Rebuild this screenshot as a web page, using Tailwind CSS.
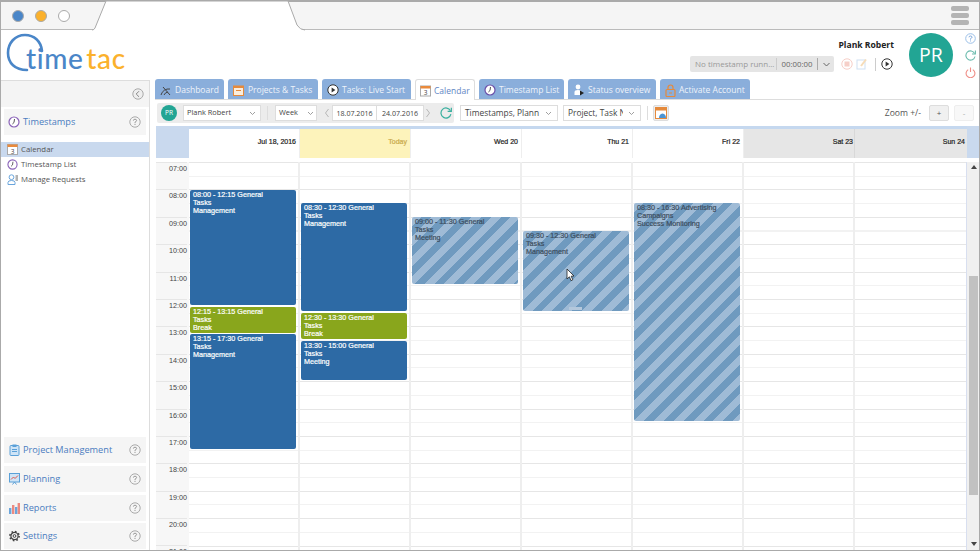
<!DOCTYPE html>
<html>

<head>
  <title>TimeTac Calendar</title>
  <script src="https://cdn.jsdelivr.net/npm/@tailwindcss/browser@4"></script>
</head>

<body class="bg-white font-['Open_Sans',sans-serif] text-[#333]">
  <div class="w-[980px] h-[551px] flex flex-col overflow-hidden border-x border-b border-[#aaa] box-border">

    <!-- browser chrome -->
    <div class="relative h-[30px] shrink-0 bg-[#f5f5f5] border-t-2 border-b border-t-[#aaa] border-b-[#bbb] flex items-center">
      <div class="flex items-center gap-[11px] ml-[11px]">
        <span class="w-[12px] h-[12px] rounded-full bg-[#4a86c8] border border-[#aaa]"></span>
        <span class="w-[12px] h-[12px] rounded-full bg-[#fbb12c] border border-[#aaa]"></span>
        <span class="w-[12px] h-[12px] rounded-full bg-white border border-[#aaa]"></span>
      </div>
      <svg class="absolute left-[90px] top-[-2px]" width="215" height="31" viewBox="0 0 215 31">
        <path d="M1 30 Q3 30 4 28 L15 1 H197 L206 25 Q209 30 214 30" fill="#fff" stroke="#aaa" stroke-width="1" />
        <path d="M4 30.5 H210" stroke="#fff" stroke-width="2" />
      </svg>
      <div class="ml-auto mr-[10px] flex flex-col gap-[2px]">
        <span class="block w-[18px] h-[5px] rounded-[2px] bg-[#b4b4b4]"></span>
        <span class="block w-[18px] h-[5px] rounded-[2px] bg-[#b4b4b4]"></span>
        <span class="block w-[18px] h-[5px] rounded-[2px] bg-[#b4b4b4]"></span>
      </div>
    </div>

    <!-- app header -->
    <div class="h-[50px] shrink-0 flex items-start">
      <div class="relative w-[140px] h-[49px] shrink-0">
        <svg class="absolute left-[4px] top-[3px]" width="44" height="42" viewBox="0 0 44 42">
          <path d="M37 18 C36 8 29 2 20 2 C10 2 3 10 3 20 C3 30 10 37 22 37" fill="none" stroke="#4a86c8" stroke-width="2.6" stroke-linecap="round" />
        </svg>
        <div class="absolute left-[25px] top-[8px] flex gap-[3px] font-['Lato',sans-serif] font-medium text-[28px] leading-[40px] tracking-[0.6px] whitespace-nowrap">
          <span class="text-[#4a86c8]">time</span>
          <span class="text-[#fbb12c]">tac</span>
        </div>
      </div>

      <div class="ml-auto flex items-start">
        <div class="flex flex-col items-end mt-[9px] mr-[16px]">
          <div class="text-[8.6px] leading-[12px] font-bold text-[#222] mr-[-1px]">Plank Robert</div>
          <div class="flex items-center mt-[5px]">
            <div class="w-[144px] h-[16px] rounded-[2px] bg-[#e5e5e5] flex items-center text-[8px] text-[#999]">
              <span class="pl-[5px] w-[87px] whitespace-nowrap border-r border-[#ccc] leading-[12px]">No timestamp runn...</span>
              <span class="w-[41px] text-center text-[7.8px] text-[#666] border-r border-[#aaa] leading-[12px]">00:00:00</span>
              <svg class="ml-[4px]" width="9" height="9" viewBox="0 0 9 9"><path d="M1.5 3 L4.5 6 L7.5 3" fill="none" stroke="#666" /></svg>
            </div>
            <svg class="ml-[7px]" width="12" height="12" viewBox="0 0 12 12">
              <circle cx="6" cy="6" r="5.2" fill="none" stroke="#f6cfc8" /><rect x="3.5" y="3.5" width="5" height="5" fill="#f6cfc8" />
            </svg>
            <svg class="ml-[3px]" width="12" height="12" viewBox="0 0 12 12">
              <rect x="1" y="2" width="8" height="9" fill="none" stroke="#cfe0f2" /><path d="M5 8 L10 1.5" stroke="#f6dcb8" stroke-width="2" />
            </svg>
            <span class="ml-[7px] w-px h-[13px] bg-[#ccc]"></span>
            <svg class="ml-[5px]" width="12" height="12" viewBox="0 0 12 12">
              <circle cx="6" cy="6" r="5.2" fill="none" stroke="#333" /><path d="M4.6 3.4 L8.4 6 L4.6 8.6 Z" fill="#333" />
            </svg>
          </div>
        </div>
        <div class="w-[44px] h-[44px] mt-[3px] rounded-full bg-[#22a594] flex items-center justify-center text-white text-[19.5px]">PR</div>
        <div class="flex flex-col items-center gap-[6px] mt-[3px] ml-[12px] mr-[3px]">
          <svg width="11" height="11" viewBox="0 0 11 11">
            <circle cx="5.5" cy="5.5" r="4.8" fill="none" stroke="#9cc0e8" /><path d="M4 4.3 Q4 3 5.5 3 Q7 3 7 4.3 Q7 5 5.5 5.7 V6.6 M5.5 7.5 V8.4" fill="none" stroke="#6f9fd8" stroke-width=".9" />
          </svg>
          <svg width="11" height="11" viewBox="0 0 11 11">
            <path d="M9.6 3.4 A4.6 4.6 0 1 0 10 6.5" fill="none" stroke="#6cbcae" stroke-width="1.1" /><path d="M10.4 .6 V4 H7" fill="none" stroke="#6cbcae" stroke-width="1.1" />
          </svg>
          <svg width="11" height="11" viewBox="0 0 11 11">
            <path d="M3.2 2.6 A4.4 4.4 0 1 0 7.8 2.6" fill="none" stroke="#ef8f88" stroke-width="1.1" /><path d="M5.5 .5 V5" stroke="#ef8f88" stroke-width="1.1" />
          </svg>
        </div>
      </div>
    </div>

    <div class="flex-1 flex min-h-0">
      <!-- sidebar -->
      <aside class="w-[149px] shrink-0 border-t border-r border-[#ddd] flex flex-col justify-between text-[#4a7cc0]">
        <div>
          <div class="h-[26px] bg-[#f4f4f4] flex items-center justify-end pr-[5px]">
            <svg width="12" height="12" viewBox="0 0 12 12"><circle cx="6" cy="6" r="5.2" fill="#eee" stroke="#aaa" /><path d="M7 3.2 L4.2 6 L7 8.8" fill="none" stroke="#888" /></svg>
          </div>
          <div class="mt-[2px] mr-[3px] ml-[3px] h-[26px] bg-[#f5f5f5] flex items-center pl-[4px] pr-[5px] text-[9.2px]">
            <svg width="12" height="12" viewBox="0 0 12 12"><circle cx="6" cy="6" r="5" fill="#fff" stroke="#8a63b8" stroke-width="1.2" /><path d="M6.5 3 L6 6.5 L4.4 8" fill="none" stroke="#555" /></svg>
            <span class="ml-[3px]">Timestamps</span>
            <svg class="ml-auto" width="12" height="12" viewBox="0 0 12 12"><circle cx="6" cy="6" r="5.2" fill="none" stroke="#aaa" /><path d="M4.4 4.6 Q4.4 3.2 6 3.2 Q7.6 3.2 7.6 4.6 Q7.6 5.4 6 6.2 V7.2 M6 8 V9" fill="none" stroke="#999" /></svg>
          </div>
          <ul class="mt-[7px] text-[7.8px] text-[#555]">
            <li class="h-[15px] bg-[#c9d9ee] flex items-center pl-[6px] gap-[3px]">
              <svg width="11" height="11" viewBox="0 0 11 11"><rect x=".5" y=".5" width="10" height="10" fill="#fff" stroke="#aaa" /><rect x=".5" y=".5" width="10" height="2.5" fill="#e98a3c" /><text x="5.5" y="9.5" text-anchor="middle" font-size="6.5" fill="#444">3</text></svg>
              <span>Calendar</span>
            </li>
            <li class="h-[15px] flex items-center pl-[6px] gap-[3px]">
              <svg width="11" height="11" viewBox="0 0 12 12"><circle cx="6" cy="6" r="5" fill="#fff" stroke="#8a63b8" stroke-width="1.2" /><path d="M6.5 3 L6 6.5 L4.4 8" fill="none" stroke="#555" /></svg>
              <span>Timestamp List</span>
            </li>
            <li class="h-[15px] flex items-center pl-[6px] gap-[3px]">
              <svg width="11" height="11" viewBox="0 0 11 11"><circle cx="4.5" cy="3.2" r="2.4" fill="#fff" stroke="#6aa5dc" /><path d="M1 10.5 V8.5 Q1 6.5 4.5 6.5 Q8 6.5 8 8.5 V10.5 Z" fill="#fff" stroke="#6aa5dc" /><path d="M8.5 2 H11 M8.5 4 H11 M8.5 6 H11" stroke="#666" /></svg>
              <span>Manage Requests</span>
            </li>
          </ul>
        </div>

        <div class="flex flex-col gap-[3px] mx-[3px] mb-[1px] text-[9.2px]">
          <div class="h-[26px] bg-[#f5f5f5] flex items-center pl-[5px] pr-[5px]">
            <svg width="11" height="12" viewBox="0 0 11 12"><rect x="1" y="1.5" width="9" height="10" rx="1" fill="#cfe4f6" stroke="#5aa0d8" /><rect x="3.5" y=".5" width="4" height="2.5" fill="#5aa0d8" /><path d="M3 5.5 H8 M3 7.5 H8" stroke="#5aa0d8" /></svg>
            <span class="ml-[3px]">Project Management</span>
            <svg class="ml-auto" width="12" height="12" viewBox="0 0 12 12"><circle cx="6" cy="6" r="5.2" fill="none" stroke="#aaa" /><path d="M4.4 4.6 Q4.4 3.2 6 3.2 Q7.6 3.2 7.6 4.6 Q7.6 5.4 6 6.2 V7.2 M6 8 V9" fill="none" stroke="#999" /></svg>
          </div>
          <div class="h-[26px] bg-[#f5f5f5] flex items-center pl-[5px] pr-[5px]">
            <svg width="11" height="12" viewBox="0 0 11 12"><rect x=".5" y=".5" width="10" height="8.5" fill="#cfe4f6" stroke="#5aa0d8" /><path d="M2 6.5 L4.5 4 L6 5.5 L9 2.5" fill="none" stroke="#e0584c" /><path d="M3.5 11.5 L5.5 9 L7.5 11.5" fill="none" stroke="#5aa0d8" /></svg>
            <span class="ml-[3px]">Planning</span>
            <svg class="ml-auto" width="12" height="12" viewBox="0 0 12 12"><circle cx="6" cy="6" r="5.2" fill="none" stroke="#aaa" /><path d="M4.4 4.6 Q4.4 3.2 6 3.2 Q7.6 3.2 7.6 4.6 Q7.6 5.4 6 6.2 V7.2 M6 8 V9" fill="none" stroke="#999" /></svg>
          </div>
          <div class="h-[26px] bg-[#f5f5f5] flex items-center pl-[5px] pr-[5px]">
            <svg width="11" height="12" viewBox="0 0 11 12"><rect x="0" y="6" width="2.4" height="6" fill="#6aa5dc" /><rect x="3" y="3" width="2.4" height="9" fill="#ec8a80" /><rect x="6" y="5" width="2.4" height="7" fill="#6aa5dc" /><rect x="8.6" y="1" width="2.4" height="11" fill="#ec8a80" /></svg>
            <span class="ml-[3px]">Reports</span>
            <svg class="ml-auto" width="12" height="12" viewBox="0 0 12 12"><circle cx="6" cy="6" r="5.2" fill="none" stroke="#aaa" /><path d="M4.4 4.6 Q4.4 3.2 6 3.2 Q7.6 3.2 7.6 4.6 Q7.6 5.4 6 6.2 V7.2 M6 8 V9" fill="none" stroke="#999" /></svg>
          </div>
          <div class="h-[26px] mt-[-1px] bg-[#f5f5f5] flex items-center pl-[5px] pr-[5px]">
            <svg width="11" height="12" viewBox="0 0 11 11"><circle cx="5.5" cy="5.5" r="3.6" fill="none" stroke="#444" stroke-width="1.2" /><circle cx="5.5" cy="5.5" r="4.6" fill="none" stroke="#444" stroke-width="1.6" stroke-dasharray="1.6 2" /><circle cx="5.5" cy="5.5" r="1.4" fill="none" stroke="#444" /></svg>
            <span class="ml-[3px]">Settings</span>
            <svg class="ml-auto" width="12" height="12" viewBox="0 0 12 12"><circle cx="6" cy="6" r="5.2" fill="none" stroke="#aaa" /><path d="M4.4 4.6 Q4.4 3.2 6 3.2 Q7.6 3.2 7.6 4.6 Q7.6 5.4 6 6.2 V7.2 M6 8 V9" fill="none" stroke="#999" /></svg>
          </div>
        </div>
      </aside>

      <!-- main -->
      <main class="flex-1 min-w-0 ml-[5px] flex flex-col">
        <nav class="h-[20px] shrink-0 flex items-end gap-[4px] text-[8.5px] text-[#eef3fa] border-b border-[#ddd]">
          <div class="w-[69px] h-[20px] pt-[2px] rounded-t-[3px] bg-[#8aaedb] flex items-center pl-[5px] gap-[3px] whitespace-nowrap">
            <svg width="12" height="12" viewBox="0 0 12 12"><path d="M1 11 A8 8 0 0 1 10 5 M4 11 A5 5 0 0 1 8 8" fill="none" stroke="#444" /><path d="M3 3 L10 11" stroke="#444" /></svg>
            <span>Dashboard</span>
          </div>
          <div class="w-[90px] h-[20px] pt-[2px] rounded-t-[3px] bg-[#8aaedb] flex items-center pl-[5px] gap-[4px] whitespace-nowrap">
            <svg width="11" height="12" viewBox="0 0 11 12"><rect x=".5" y="2" width="10" height="9.5" fill="#fbeedd" stroke="#e58a3c" /><rect x=".5" y="2" width="10" height="2" fill="#e58a3c" /><path d="M3 6.5 H8" stroke="#e58a3c" /></svg>
            <span>Projects &amp; Tasks</span>
          </div>
          <div class="w-[89px] h-[20px] pt-[2px] rounded-t-[3px] bg-[#8aaedb] flex items-center pl-[5px] gap-[3px] whitespace-nowrap">
            <svg width="12" height="12" viewBox="0 0 12 12"><circle cx="6" cy="6" r="5.2" fill="#fff" stroke="#333" /><path d="M4.6 3.4 L8.4 6 L4.6 8.6 Z" fill="#333" /></svg>
            <span>Tasks: Live Start</span>
          </div>
          <div class="w-[60px] h-[21px] pt-[2px] mb-[-1px] rounded-t-[3px] bg-white border border-b-0 border-[#ddd] flex items-center pl-[4px] gap-[3px] text-[#5f86c4] whitespace-nowrap">
            <svg width="11" height="12" viewBox="0 0 11 11"><rect x=".5" y=".5" width="10" height="10" fill="#fff" stroke="#aaa" /><rect x=".5" y=".5" width="10" height="2.5" fill="#e98a3c" /><text x="5.5" y="9.5" text-anchor="middle" font-size="6.5" fill="#444">3</text></svg>
            <span>Calendar</span>
          </div>
          <div class="w-[85px] h-[20px] pt-[2px] rounded-t-[3px] bg-[#8aaedb] flex items-center pl-[5px] gap-[3px] whitespace-nowrap">
            <svg width="12" height="12" viewBox="0 0 12 12"><circle cx="6" cy="6" r="5" fill="#fff" stroke="#6a4fa8" stroke-width="1.2" /><path d="M6.5 3 L6 6.5 L4.4 8" fill="none" stroke="#555" /></svg>
            <span>Timestamp List</span>
          </div>
          <div class="w-[88px] h-[20px] pt-[2px] rounded-t-[3px] bg-[#8aaedb] flex items-center pl-[5px] gap-[3px] whitespace-nowrap">
            <svg width="12" height="12" viewBox="0 0 12 12"><circle cx="5" cy="3" r="2.4" fill="#fff" /><path d="M1.5 11 V8 Q1.5 6 5 6 Q8 6 8 8 V11 Z" fill="#fff" /><path d="M7 6.5 L11 9 L7 11.5 Z" fill="#222" /></svg>
            <span>Status overview</span>
          </div>
          <div class="w-[90px] h-[20px] pt-[2px] rounded-t-[3px] bg-[#8aaedb] flex items-center pl-[5px] gap-[3px] whitespace-nowrap">
            <svg width="11" height="13" viewBox="0 0 11 13"><rect x="1" y="5.5" width="9" height="7" rx="1" fill="none" stroke="#e58a3c" stroke-width="1.2" /><path d="M3 5.5 V3.5 A2.5 2.5 0 0 1 8 3.5 V5.5" fill="none" stroke="#e58a3c" stroke-width="1.2" /><path d="M4 9 H7" stroke="#e58a3c" /></svg>
            <span>Activate Account</span>
          </div>
        </nav>

        <!-- toolbar -->
        <div class="h-[26px] shrink-0 flex items-center text-[7.4px] text-[#444]">
          <div class="ml-[2px] w-[297px] h-[20px] rounded-[2px] bg-[#ececec] flex items-center relative shrink-0">
            <span class="ml-[4px] w-[16px] h-[16px] rounded-full bg-[#22a594] text-white text-[6.5px] flex items-center justify-center shrink-0">PR</span>
            <div class="ml-[6px] w-[78px] h-[16px] bg-white border border-[#ddd] flex items-center pl-[3px] justify-between pr-[4px]">
              <span>Plank Robert</span>
              <svg width="7" height="7" viewBox="0 0 7 7"><path d="M1 2 L3.5 4.5 L6 2" fill="none" stroke="#888" stroke-width=".8" /></svg>
            </div>
            <span class="ml-[6px] w-px h-[14px] bg-[#ddd]"></span>
            <div class="ml-[7px] w-[42px] h-[16px] bg-white border border-[#ddd] flex items-center pl-[3px] justify-between pr-[2px]">
              <span>Week</span>
              <svg width="7" height="7" viewBox="0 0 7 7"><path d="M1 2 L3.5 4.5 L6 2" fill="none" stroke="#888" stroke-width=".8" /></svg>
            </div>
            <div class="ml-[5px] flex items-center h-[16px]">
              <div class="w-[10px] h-[16px] flex items-center justify-center"><svg width="6" height="10" viewBox="0 0 6 10"><path d="M4.5 1 L1.5 5 L4.5 9" fill="none" stroke="#aaa" stroke-width=".8" /></svg></div>
              <div class="w-[45px] h-[16px] bg-white border border-[#ddd] flex items-center justify-center text-[7.1px]">18.07.2016</div>
              <div class="w-[47px] h-[16px] bg-white border border-l-0 border-[#ddd] flex items-center justify-center text-[7.1px]">24.07.2016</div>
              <div class="w-[8px] h-[16px] flex items-center justify-center"><svg width="6" height="10" viewBox="0 0 6 10"><path d="M1.5 1 L4.5 5 L1.5 9" fill="none" stroke="#aaa" stroke-width=".8" /></svg></div>
            </div>
            <svg class="ml-[8px]" width="12" height="12" viewBox="0 0 11 11">
              <path d="M9.6 3.4 A4.6 4.6 0 1 0 10 6.5" fill="none" stroke="#3bb0a0" stroke-width="1.1" /><path d="M10.4 .6 V4 H7" fill="none" stroke="#3bb0a0" stroke-width="1.1" />
            </svg>
          </div>
          <div class="ml-[6px] w-[98px] h-[16px] bg-white border border-[#ddd] flex items-center pl-[4px] pr-[5px] justify-between text-[8.4px] whitespace-nowrap">
            <span>Timestamps, Plann</span>
            <svg width="7" height="7" viewBox="0 0 7 7"><path d="M1 2 L3.5 4.5 L6 2" fill="none" stroke="#888" stroke-width=".8" /></svg>
          </div>
          <div class="ml-[5px] w-[78px] h-[16px] bg-white border border-[#ddd] flex items-center pl-[4px] pr-[5px] justify-between text-[8.4px] whitespace-nowrap">
            <span class="w-[55px] overflow-hidden">Project, Task Name</span>
            <svg width="7" height="7" viewBox="0 0 7 7"><path d="M1 2 L3.5 4.5 L6 2" fill="none" stroke="#888" stroke-width=".8" /></svg>
          </div>
          <span class="ml-[6px] w-px h-[14px] bg-[#ddd]"></span>
          <div class="ml-[5px] w-[16px] h-[16px] rounded-[2px] bg-[#eee] border border-[#ddd] flex items-center justify-center">
            <svg width="12" height="12" viewBox="0 0 12 12"><rect x=".5" y=".5" width="11" height="11" fill="#fff" stroke="#e58a3c" /><rect x=".5" y=".5" width="11" height="3" fill="#e58a3c" /><path d="M4 11 Q4 7 7.5 6.5 Q11 7 11 11 Z" fill="#4a94d4" /></svg>
          </div>
          <span class="ml-auto text-[8.6px] text-[#555]">Zoom +/-</span>
          <div class="ml-[8px] w-[20px] h-[16px] rounded-[2px] bg-[#f0f0f0] border border-[#ddd] flex items-center justify-center text-[8px] text-[#555]">+</div>
          <div class="ml-[5px] mr-[5px] w-[20px] h-[16px] rounded-[2px] bg-[#f8f8f8] border border-[#eee] flex items-center justify-center text-[8px] text-[#aaa]">-</div>
        </div>

        <!-- calendar -->
        <div class="flex-1 min-h-0 flex flex-col ml-[1px] font-['Liberation_Sans',sans-serif]">
          <div class="h-[36px] shrink-0 flex bg-[linear-gradient(#c5d8ef_3px,#fff_3px)]">
            <div class="w-[33px] h-[32px] shrink-0 bg-[#c9d9ee]"></div>
            <div class="w-[778px] grid grid-cols-[repeat(6,111px)_112px] pt-[3px] text-[7px] text-[#222] text-right [-webkit-text-stroke:0.2px]">
              <div class="h-[29px] border-r border-[#eee] pr-[3px] pt-[8px]">Jul 18, 2016</div>
              <div class="h-[29px] border-r border-[#eee] pr-[3px] pt-[8px] bg-[#fdf3bb] text-[#c9a94a]">Today</div>
              <div class="h-[29px] border-r border-[#eee] pr-[3px] pt-[8px]">Wed 20</div>
              <div class="h-[29px] border-r border-[#eee] pr-[3px] pt-[8px]">Thu 21</div>
              <div class="h-[29px] border-r border-[#eee] pr-[3px] pt-[8px]">Fri 22</div>
              <div class="h-[29px] border-r border-[#d8d8d8] pr-[1px] pt-[8px] bg-[#e6e6e6]">Sat 23</div>
              <div class="h-[29px] pr-[2px] pt-[8px] bg-[#e6e6e6]">Sun 24</div>
            </div>
            <div class="flex-1 h-[32px] bg-[#c9d9ee]"></div>
          </div>

          <div class="flex-1 min-h-0 flex overflow-hidden">
            <div class="w-[33px] shrink-0 bg-[#f7f7f7] text-[7.2px] text-[#444] text-right pr-[2px]">
              <div class="h-[27.4px] pt-[1px] border-t border-[#e6e6e6]">07:00</div>
              <div class="h-[27.4px] pt-[1px] border-t border-[#e6e6e6]">08:00</div>
              <div class="h-[27.4px] pt-[1px] border-t border-[#e6e6e6]">09:00</div>
              <div class="h-[27.4px] pt-[1px] border-t border-[#e6e6e6]">10:00</div>
              <div class="h-[27.4px] pt-[1px] border-t border-[#e6e6e6]">11:00</div>
              <div class="h-[27.4px] pt-[1px] border-t border-[#e6e6e6]">12:00</div>
              <div class="h-[27.4px] pt-[1px] border-t border-[#e6e6e6]">13:00</div>
              <div class="h-[27.4px] pt-[1px] border-t border-[#e6e6e6]">14:00</div>
              <div class="h-[27.4px] pt-[1px] border-t border-[#e6e6e6]">15:00</div>
              <div class="h-[27.4px] pt-[1px] border-t border-[#e6e6e6]">16:00</div>
              <div class="h-[27.4px] pt-[1px] border-t border-[#e6e6e6]">17:00</div>
              <div class="h-[27.4px] pt-[1px] border-t border-[#e6e6e6]">18:00</div>
              <div class="h-[27.4px] pt-[1px] border-t border-[#e6e6e6]">19:00</div>
              <div class="h-[27.4px] pt-[1px] border-t border-[#e6e6e6]">20:00</div>
              <div class="h-[27.4px] pt-[1px] border-t border-[#e6e6e6]">21:00</div>
            </div>

            <div class="w-[778px] shrink-0 grid grid-cols-[repeat(6,111px)_112px] text-[7.2px] leading-[7.8px] [-webkit-text-stroke:0.2px] bg-[repeating-linear-gradient(#e6e6e6_0,#e6e6e6_1px,#fff_1px,#fff_13.7px,#f2f2f2_13.7px,#f2f2f2_14.7px,#fff_14.7px,#fff_27.4px)]">
              <div class="relative border-r-2 border-[#eee]">
                <div class="absolute left-[1px] w-[106px] top-[28px] h-[115px] rounded-[2px] bg-[#2d6aa5] text-white px-[3px] pt-[1px]">08:00 - 12:15 General<br>Tasks<br>Management</div>
                <div class="absolute left-[1px] w-[106px] top-[145px] h-[26px] rounded-[2px] bg-[#89a61c] text-white px-[3px] pt-[1px]">12:15 - 13:15 General<br>Tasks<br>Break</div>
                <div class="absolute left-[1px] w-[106px] top-[172px] h-[115px] rounded-[2px] bg-[#2d6aa5] text-white px-[3px] pt-[1px]">13:15 - 17:30 General<br>Tasks<br>Management</div>
              </div>
              <div class="relative border-r-2 border-[#eee]">
                <div class="absolute left-[1px] w-[106px] top-[41px] h-[108px] rounded-[2px] bg-[#2d6aa5] text-white px-[3px] pt-[1px]">08:30 - 12:30 General<br>Tasks<br>Management</div>
                <div class="absolute left-[1px] w-[106px] top-[151px] h-[26px] rounded-[2px] bg-[#89a61c] text-white px-[3px] pt-[1px]">12:30 - 13:30 General<br>Tasks<br>Break</div>
                <div class="absolute left-[1px] w-[106px] top-[179px] h-[39px] rounded-[2px] bg-[#2d6aa5] text-white px-[3px] pt-[1px]">13:30 - 15:00 General<br>Tasks<br>Meeting</div>
              </div>
              <div class="relative border-r-2 border-[#eee]">
                <div class="absolute left-[1px] w-[106px] top-[55px] h-[67px] rounded-[2px] bg-[repeating-linear-gradient(135deg,#9fbbd6_0,#9fbbd6_7px,#6f9abf_7px,#6f9abf_14px)] text-[#3c4c5c] px-[3px] pt-[1px]">09:00 - 11:30 General<br>Tasks<br>Meeting</div>
              </div>
              <div class="relative border-r-2 border-[#eee]">
                <div class="absolute left-[1px] w-[106px] top-[69px] h-[80px] rounded-[2px] bg-[repeating-linear-gradient(135deg,#9fbbd6_0,#9fbbd6_7px,#6f9abf_7px,#6f9abf_14px)] text-[#3c4c5c] px-[3px] pt-[1px]">
                  09:30 - 12:30 General<br>Tasks<br>Management
                  <span class="absolute left-[46px] bottom-[1px] w-[13px] h-[3px] bg-[#b4c8dc]"></span>
                  <svg class="absolute left-[43px] top-[37px]" width="9" height="14" viewBox="0 0 9 14"><path d="M1 1 V11 L3.4 8.8 L5 12.6 L6.8 11.8 L5.2 8.2 L8 8 Z" fill="#fff" stroke="#222" stroke-width=".8" /></svg>
                </div>
              </div>
              <div class="relative border-r-2 border-[#eee]">
                <div class="absolute left-[1px] w-[106px] top-[41px] h-[218px] rounded-[2px] bg-[repeating-linear-gradient(135deg,#9fbbd6_0,#9fbbd6_7px,#6f9abf_7px,#6f9abf_14px)] text-[#3c4c5c] px-[3px] pt-[1px]">08:30 - 16:30 Advertising<br>Campaigns<br>Success Monitoring</div>
              </div>
              <div class="border-r-2 border-[#eee]"></div>
              <div class="border-r border-[#d8dff0]"></div>
            </div>

            <!-- scrollbar -->
            <div class="flex-1 bg-[#f0f0f0] relative">
              <svg class="absolute left-[4px] top-[3px]" width="6" height="4" viewBox="0 0 6 4"><path d="M3 0 L6 4 H0 Z" fill="#444" /></svg>
              <div class="absolute left-[2px] right-[1px] top-[114px] h-[219px] bg-[#c1c1c1]"></div>
              <svg class="absolute left-[4px] bottom-[4px]" width="6" height="4" viewBox="0 0 6 4"><path d="M0 0 H6 L3 4 Z" fill="#444" /></svg>
            </div>
          </div>
        </div>
      </main>
    </div>
  </div>
</body>

</html>
